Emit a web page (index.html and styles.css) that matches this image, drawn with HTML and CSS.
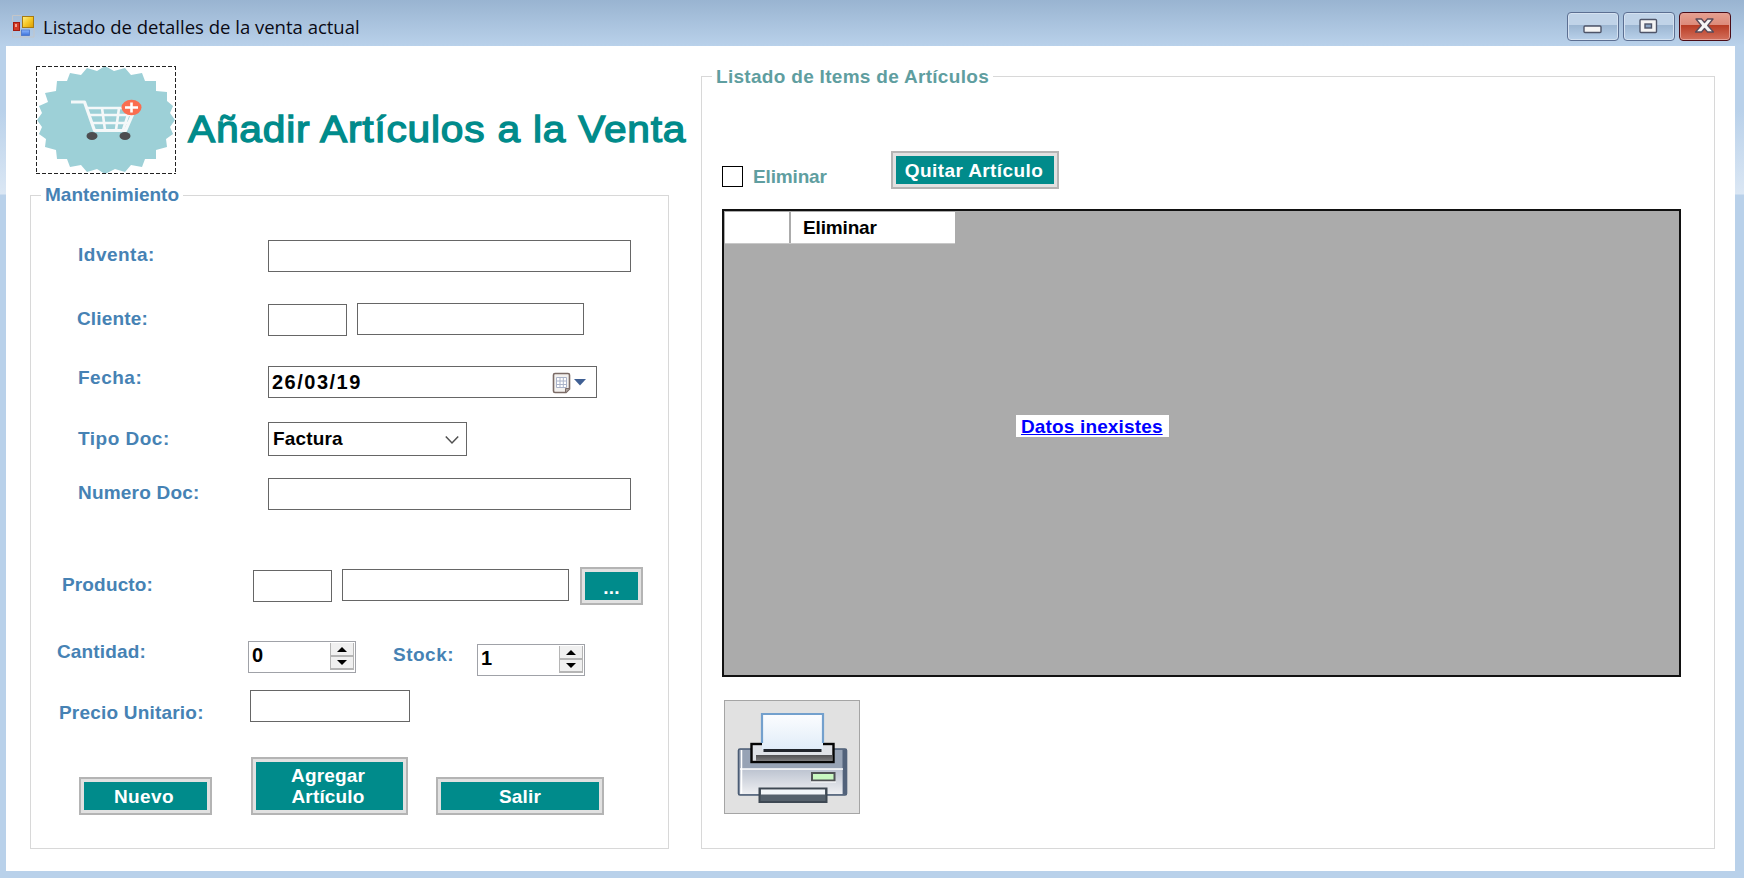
FILE: index.html
```html
<!DOCTYPE html>
<html lang="es">
<head>
<meta charset="utf-8">
<title>Listado de detalles de la venta actual</title>
<link rel="stylesheet" href="styles.css">
</head>
<body>
<div class="window">
  <header class="titlebar">
    <svg class="app-icon" width="23" height="23" viewBox="0 0 23 23">
      <defs>
        <linearGradient id="gold" x1="0" y1="0" x2="1" y2="1"><stop offset="0" stop-color="#fff08a"/><stop offset=".5" stop-color="#f6c928"/><stop offset="1" stop-color="#d99a00"/></linearGradient>
        <linearGradient id="blue" x1="0" y1="0" x2="0" y2="1"><stop offset="0" stop-color="#8db8ff"/><stop offset="1" stop-color="#3a6fd8"/></linearGradient>
      </defs>
      <path d="M.5 7V.5H10M.5 16v6H22V13M8.500 16v6" fill="none" stroke="#c3c5c8"/>
      <rect x="10.500" y="1.500" width="11" height="11" fill="url(#gold)" stroke="#a87a10"/>
      <rect x="1.500" y="7.500" width="6" height="8" fill="#d23a24" stroke="#a31b10"/>
      <rect x="3" y="9" width="2" height="3" fill="#f3a090"/>
      <rect x="9.500" y="15" width="8" height="5.500" fill="url(#blue)" stroke="#4a74c8" stroke-width=".8"/>
    </svg>
    <h1 class="caption">Listado de detalles de la venta actual</h1>
    <div class="controls">
      <button class="ctl" aria-label="Minimizar">
        <svg width="50" height="27" viewBox="0 0 50 27"><rect x="16" y="13" width="17" height="6.500" rx="1" fill="#f4f4f4" stroke="#4e5468" stroke-width="1.400"/></svg>
      </button>
      <button class="ctl" aria-label="Restaurar">
        <svg width="50" height="27" viewBox="0 0 50 27"><rect x="16" y="6.500" width="16.500" height="13" rx="1" fill="#f4f4f4" stroke="#4e5468" stroke-width="1.400"/><rect x="21" y="11" width="6.500" height="4" fill="#8ba4c3" stroke="#4e5468" stroke-width="1.400"/></svg>
      </button>
      <button class="ctl close" aria-label="Cerrar">
        <svg width="50" height="27" viewBox="0 0 50 27"><path d="M16 6h5.500l3 3.500 3-3.500H33l-5.300 6.500L33.500 19h-6l-3-3.500-3 3.500h-6l5.800-6.500z" fill="#f4f4f4" stroke="#5a4a58" stroke-width="1.300" stroke-linejoin="round"/></svg>
      </button>
    </div>
  </header>

  <main class="client">
    <section class="left">
      <div class="heading">
        <div class="logo">
          <svg width="140" height="108" viewBox="0 0 138 108">
            <path fill="#9dd0d7" d="M68 0L77 5 88 2 94 9 105 7 108 15 119 15V25L130 26V35L136 40 133 47 138 54 133 61 136 68 129 73 130 81 119 84V93L108 93 105 101 94 99 88 106 78 103 68 108 60 103 50 106 44 99 33 101 30 93 20 93 19 84 8 81 9 73 2 68 5 61 0 54 5 47 2 40 11 36 8 27 19 25 20 15 30 15 33 7 44 9 50 2 60 5z"/>
            <g fill="none" stroke="#f4f8f9" stroke-linejoin="round">
              <path d="M34 36h13.500l10 28.500h31l7-16" stroke-width="3.200"/>
              <path d="M50 42h36M53 49h43M56 57h36M65 42l3 22M82 42l-3 22M91 49l-5 15" stroke-width="2.600"/>
            </g>
            <ellipse cx="55" cy="70" rx="5.500" ry="4" fill="#4d4d50"/><ellipse cx="88" cy="70" rx="5.500" ry="4" fill="#4d4d50"/>
            <ellipse cx="94.500" cy="41.500" rx="10" ry="7.800" fill="#fa6e50"/>
            <path d="M88 41.500h13M94.500 36.500v10" stroke="#fff" stroke-width="2.600"/>
          </svg>
        </div>
        <h2 class="title">Añadir Artículos a la Venta</h2>
      </div>

      <fieldset class="group maint">
        <legend>Mantenimiento</legend>
        <div class="row r-id"><label>Idventa:</label><span class="box wide"></span></div>
        <div class="row r-cli"><label>Cliente:</label><span class="box code"></span><span class="box name"></span></div>
        <div class="row r-fecha"><label>Fecha:</label>
          <span class="box date">26/03/19
            <svg width="36" height="24" viewBox="0 0 36 24"><path d="M3 1.500h13q1.500 0 1.500 1.500v14l-3.500 3.500H3q-1.500 0-1.500-1.500V3q0-1.500 1.500-1.500z" fill="#f3f1ef" stroke="#7b6b66" stroke-width="1.600"/><path d="M4.500 5.500h10v10h-10zM4.500 9h10M4.500 12.500h10M8 5.500v10M11.300 5.500v10" fill="#fff" stroke="#aab3c9" stroke-width="1"/><path d="M13.500 20.500v-4h4" fill="#a8a09c" stroke="#7b6b66"/><path d="M22 7h12l-6 6.500z" fill="#3f5f93"/></svg>
          </span>
        </div>
        <div class="row r-tipo"><label>Tipo Doc:</label>
          <span class="box combo">Factura
            <svg width="14" height="10" viewBox="0 0 14 10"><path d="M.8 1.500L7 8l6.200-6.500" fill="none" stroke="#505050" stroke-width="1.500"/></svg>
          </span>
        </div>
        <div class="row r-num"><label>Numero Doc:</label><span class="box wide"></span></div>
        <div class="row r-prod"><label>Producto:</label><span class="box code"></span><span class="box name"></span><button class="btn more">...</button></div>
        <div class="row r-cant"><label>Cantidad:</label>
          <span class="spin">0<span class="arrows"><i class="up"></i><i class="down"></i></span></span>
          <label class="stock">Stock:</label>
          <span class="spin second">1<span class="arrows"><i class="up"></i><i class="down"></i></span></span>
        </div>
        <div class="row r-precio"><label>Precio Unitario:</label><span class="box price"></span></div>
        <div class="row actions"><button class="btn nuevo">Nuevo</button><button class="btn agregar">Agregar<br>Artículo</button><button class="btn salir">Salir</button></div>
      </fieldset>
    </section>

    <fieldset class="group items">
      <legend>Listado de Items de Artículos</legend>
      <div class="tools"><span class="check"></span><label>Eliminar</label><button class="btn quitar">Quitar Artículo</button></div>
      <div class="grid">
        <div class="grid-head"><span class="corner"></span><span class="col">Eliminar</span></div>
        <a class="empty">Datos inexistes</a>
      </div>
      <button class="print" aria-label="Imprimir">
        <svg width="134" height="112" viewBox="0 0 134 112">
          <defs>
            <linearGradient id="body" x1="0" y1="0" x2="0" y2="1"><stop offset="0" stop-color="#bcc3d0"/><stop offset="1" stop-color="#eeeff2"/></linearGradient>
            <linearGradient id="paper" x1="0" y1="0" x2="0" y2="1"><stop offset="0" stop-color="#fcfdff"/><stop offset="1" stop-color="#e0ecf8"/></linearGradient>
            <linearGradient id="tray" x1="0" y1="0" x2="0" y2="1"><stop offset="0" stop-color="#505052"/><stop offset="1" stop-color="#7c7c7e"/></linearGradient>
          </defs>
          <rect x="13.500" y="49" width="108" height="46" rx="1.500" fill="#97a3b5" stroke="#4b5c74" stroke-width="1.600"/>
          <rect x="117.500" y="49.500" width="4.500" height="45" fill="#52627a"/>
          <rect x="15" y="69" width="102.500" height="25" fill="url(#body)"/>
          <path d="M15 69h103M16.500 50v43.500" stroke="#fff" stroke-width="1.500"/>
          <rect x="26.500" y="44" width="82" height="18" fill="#dfe2e7" stroke="#050505" stroke-width="2.400"/>
          <rect x="31" y="55" width="76.500" height="6" fill="url(#tray)"/>
          <path d="M37 50V14h61v36z" fill="url(#paper)"/>
          <path d="M37 43V14h61v29" fill="none" stroke="#73a0cd" stroke-width="2.200"/>
          <path d="M38.500 50.500h58" stroke="#20242b" stroke-width="3"/>
          <rect x="87" y="73" width="22.500" height="7.500" fill="#c9f8c1" stroke="#505356" stroke-width="2"/>
          <path d="M86 82h25" stroke="#fff"/>
          <rect x="34.500" y="88.500" width="67" height="13.500" fill="#56616c" stroke="#3e4853" stroke-width="2"/>
          <rect x="36" y="89.500" width="64" height="5" fill="#f3f6f9"/>
        </svg>
      </button>
    </fieldset>
  </main>
</div>
</body>
</html>
```
FILE: styles.css
```css
* { box-sizing: border-box; }
body {
  margin: 0;
  font: bold 19px/24px "Liberation Sans", Arial, sans-serif;
  letter-spacing: .15px;
}
button { font: inherit; letter-spacing: inherit; padding: 0; }
.window {
  width: 1744px; height: 878px;
  padding: 0 9px 7px 6px;
  background: linear-gradient(#99b4d1 0, #b9d1ea 46px, #b9d1ea 110px, #dbe7f4 194px, #b9d1ea 195px);
  overflow: hidden;
}
.titlebar { height: 46px; display: flex; align-items: flex-start; padding-left: 6px; }
.app-icon { margin-top: 15px; }
.caption {
  margin: 14px 0 0 8px; flex: 1;
  font: 18.5px/25px "Open Sans", "Noto Sans", sans-serif;
  letter-spacing: 0; color: #0a0a14; white-space: nowrap;
}
.controls { display: flex; gap: 4px; margin-top: 12px; padding-right: 4px; }
.ctl {
  width: 52px; height: 29px; border: 1px solid #5c6f92; border-radius: 4px;
  background: linear-gradient(#c0d3e8 0 45%, #9cb6d2 46%, #b9d1ea 100%);
  box-shadow: inset 0 0 0 1px #d5e2f1; overflow: hidden;
}
.ctl svg { display: block; }
.ctl.close {
  border-color: #4b0c16; box-shadow: inset 0 0 0 1px #e5a096;
  background: linear-gradient(#e6a090 0, #dc8a7a 45%, #b93d25 46%, #d3705c 100%);
}

.client { height: 825px; background: #fff; display: flex; padding: 20px 20px 0 24px; }
.left { width: 639px; }
.heading { display: flex; height: 121px; padding-left: 6px; }
.logo { width: 140px; height: 108px; position: relative; }
.logo::after {
  content: ""; position: absolute; inset: 0;
  --dash: #222 0 4px, transparent 4px 6px;
  background:
    repeating-linear-gradient(90deg, var(--dash)) 0 0 / 100% 1px no-repeat,
    repeating-linear-gradient(90deg, var(--dash)) 0 100% / 100% 1px no-repeat,
    repeating-linear-gradient(var(--dash)) 0 0 / 1px 100% no-repeat,
    repeating-linear-gradient(var(--dash)) 100% 0 / 1px 100% no-repeat;
}
.logo svg { display: block; }
.title {
  margin: 42px 0 0 12px; white-space: nowrap;
  font: 37px/44px "Liberation Sans", Arial, sans-serif;
  letter-spacing: .7px; color: #008b8b; -webkit-text-stroke: 1.300px #008b8b;
  transform: scaleX(1.1); transform-origin: 0 0;
}

.group { margin: 0; padding: 0; border: 1px solid #d8d8d8; min-width: 0; }
.group legend { height: 16px; line-height: 16px; padding: 0 4px; margin-left: 10px; white-space: nowrap; }
.maint { height: 662px; color: #4682b4; }
.maint legend { letter-spacing: 0; }
.items { width: 1014px; height: 781px; margin: 2px 0 0 32px; color: #5f9ea0; }
.items legend { letter-spacing: .3px; line-height: 18px; }
.row { display: flex; align-items: flex-start; }
.row label { white-space: nowrap; flex: none; }

.box { height: 32px; border: 1px solid #666; background: #fff; color: #000; flex: none; }
.wide { width: 363px; }
.code { width: 79px; }
.name { width: 227px; margin-left: 10px; }
.date { width: 329px; display: flex; justify-content: space-between; padding: 3px 8px 0 3px; font-size: 20px; letter-spacing: 1.5px; }
.date svg { margin-top: 2px; }
.combo { width: 199px; height: 34px; display: flex; justify-content: space-between; padding: 4px 7px 0 4px; }
.combo svg { margin-top: 8px; }
.price { width: 160px; }

.r-id { height: 33px; margin-top: 37px; padding-left: 46px; }
.r-id label, .r-cli label, .r-fecha label, .r-tipo label, .r-num label { width: 190px; margin-left: 1px; }
.r-id label { margin-top: 3px; letter-spacing: .5px; }
.r-cli { height: 35px; margin-top: 29px; padding-left: 46px; }
.r-cli label { margin: 5px 1px 0 0; }
.r-cli .code { margin-top: 2px; }
.r-cli .name { margin-top: 1px; }
.r-fecha { height: 34px; margin-top: 29px; padding-left: 46px; }
.r-fecha label { letter-spacing: .5px; }
.r-tipo { height: 35px; margin-top: 22px; padding-left: 46px; }
.r-tipo label { margin-top: 5px; letter-spacing: .5px; }
.r-num { height: 33px; margin-top: 21px; padding-left: 46px; }
.r-num label { margin-top: 3px; letter-spacing: .2px; }
.r-prod { height: 38px; margin-top: 56px; padding-left: 31px; }
.r-prod label { width: 191px; margin-top: 6px; }
.r-prod .code { margin-top: 3px; }
.r-prod .name { margin-top: 2px; }
.r-cant { height: 36px; margin-top: 36px; padding-left: 26px; }
.r-cant label { width: 191px; margin-top: -1px; }
.r-cant label.stock { width: 84px; margin: 2px 0 0 37px; letter-spacing: .5px; }
.r-precio { height: 33px; margin-top: 13px; padding-left: 28px; }
.r-precio label { width: 191px; margin-top: 11px; letter-spacing: .2px; }
.actions { height: 58px; margin-top: 34px; padding-left: 48px; align-items: flex-end; }

.spin {
  width: 108px; height: 32px; border: 1px solid #a0a2a8; background: #fff; color: #000;
  display: flex; justify-content: space-between; padding: 1px 1px 0 3px; flex: none; font-size: 20px;
}
.spin.second { margin-top: 3px; }
.arrows { width: 24px; height: 27px; display: grid; grid-template-rows: 14px 13px; border-left: 1px solid #b5b5b5; }
.arrows i { background: #f0f0f0; border: 1px solid #b5b5b5; border-width: 0 1px 2px 0; display: grid; place-items: center; }
.arrows i::after { content: ""; border: 5px solid transparent; border-top-width: 0; border-bottom: 5px solid #000; }
.arrows .down::after { transform: rotate(180deg); }

.btn {
  height: 38px; background: #008b8b; color: #fff; border: 2px solid #b4b4b4;
  box-shadow: inset 0 0 0 3px #e1e1e1; line-height: 21px; white-space: nowrap; flex: none;
}
.more { width: 63px; margin-left: 11px; padding-top: 2px; }
.nuevo { width: 133px; padding-right: 3px; letter-spacing: .4px; }
.agregar { width: 157px; height: 58px; margin-left: 39px; padding-right: 3px; padding-bottom: 1px; }
.salir { width: 168px; margin-left: 28px; }
.quitar { width: 168px; margin-left: 64px; letter-spacing: .4px; padding-right: 2px; }

.tools { display: flex; align-items: flex-start; height: 38px; margin: 67px 0 0 20px; }
.check { width: 21px; height: 21px; margin-top: 15px; border: 1px solid #000; }
.tools label { width: 74px; margin: 14px 0 0 10px; letter-spacing: -.15px; }
.grid { width: 959px; height: 468px; margin: 20px 0 0 20px; background: #ababab; border: 2px solid #111; display: flex; flex-direction: column; align-items: flex-start; padding: 1px; }
.grid-head { display: flex; width: 230px; height: 32px; background: #fff; border-bottom: 1px solid #c8c8c8; color: #000; }
.corner { width: 66px; border-right: 2px solid #ababab; }
.col { padding: 4px 0 0 12px; letter-spacing: -.15px; }
.empty { margin: 171px 0 0 291px; width: 153px; height: 22px; line-height: 23px; background: #fff; color: #00f; text-decoration: underline; padding-left: 5px; white-space: nowrap; }
.print { display: block; width: 136px; height: 114px; margin: 23px 0 0 22px; background: #e1e1e1; border: 1px solid #a5a5a5; }
.print svg { display: block; margin-top: -2px; }
```
